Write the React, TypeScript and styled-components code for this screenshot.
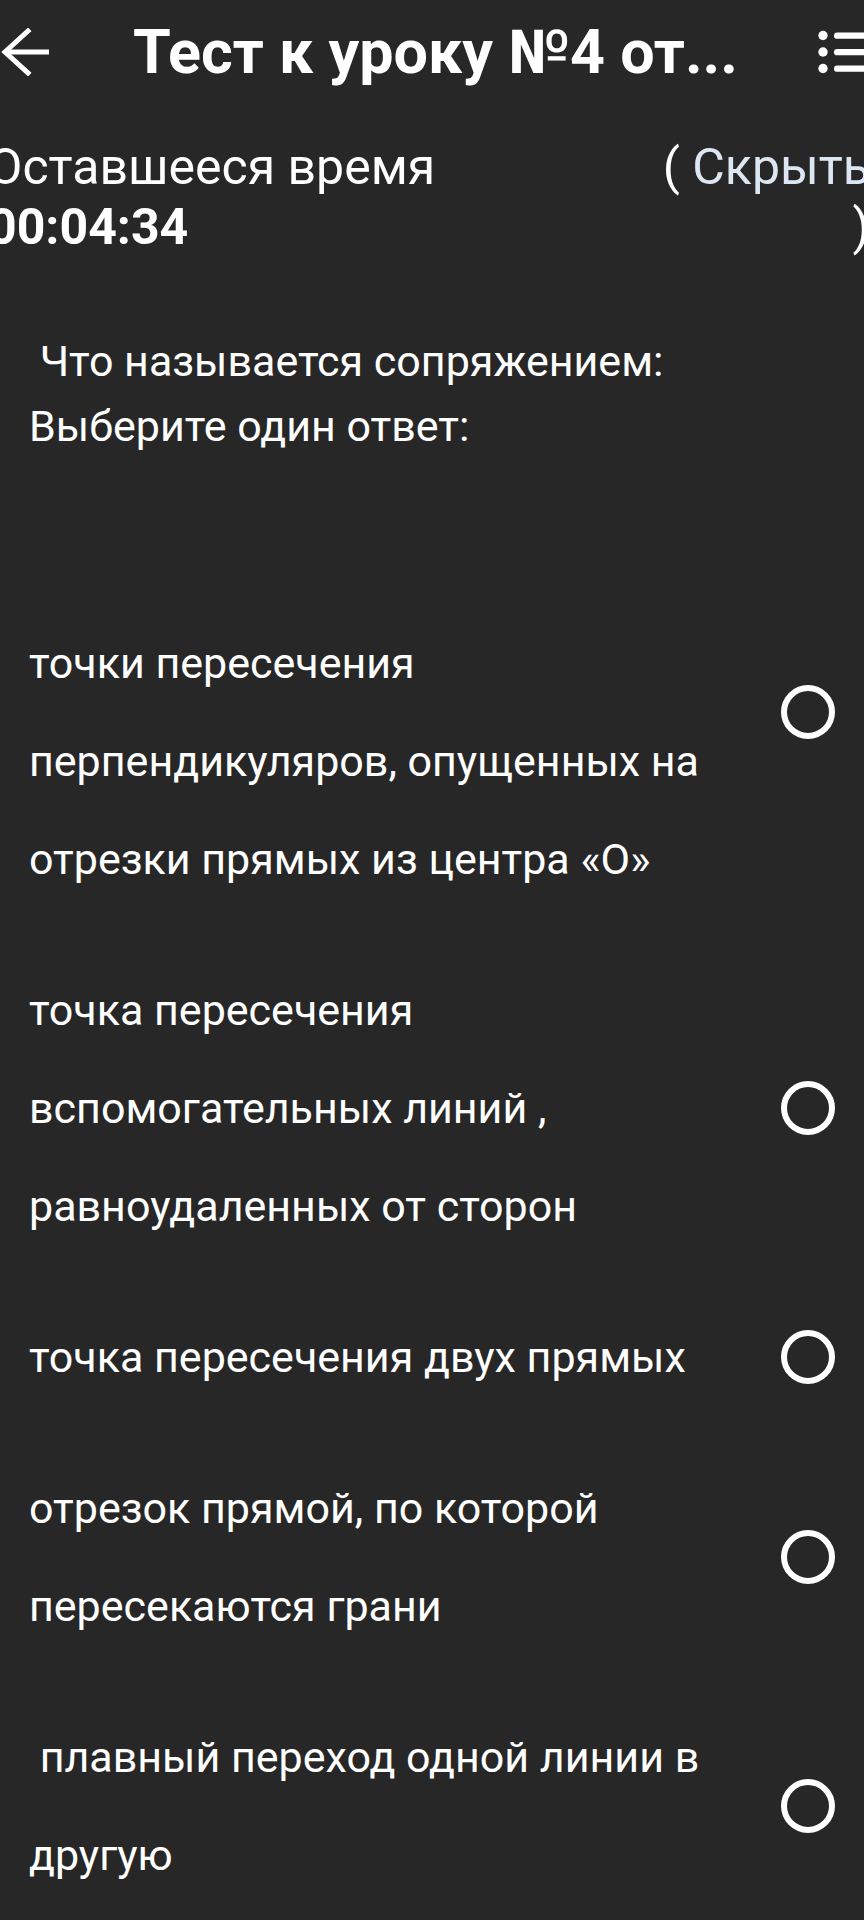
import React from "react";
import styled, { createGlobalStyle } from "styled-components";

const GlobalStyle = createGlobalStyle`
  html, body {
    margin: 0;
    padding: 0;
    background: #272727;
    overflow-x: hidden;
  }
  body {
    font-family: Roboto, "Noto Sans", "Liberation Sans", sans-serif;
    color: #ffffff;
  }
`;

const Page = styled.div`
  width: 864px;
  min-height: 1920px;
  background: #272727;
  display: flex;
  flex-direction: column;
  overflow: hidden;
`;

const Header = styled.header`
  display: flex;
  align-items: center;
  height: 80px;
  margin-top: 12px;
`;

const BackButton = styled.button`
  display: flex;
  align-items: center;
  justify-content: center;
  width: 52px;
  height: 80px;
  padding: 0;
  border: none;
  background: transparent;
  cursor: pointer;
`;

const Title = styled.h1`
  flex: 1;
  margin: 0 0 0 81px;
  font-size: 61px;
  line-height: 80px;
  font-weight: 700;
  color: #ffffff;
  white-space: nowrap;
`;

const MenuButton = styled.button`
  display: flex;
  align-items: center;
  width: 66px;
  height: 80px;
  padding: 0;
  margin-right: -14px;
  border: none;
  background: transparent;
  cursor: pointer;
`;

const TimerRow = styled.section`
  display: flex;
  justify-content: space-between;
  align-items: flex-start;
  margin-top: 45px;
`;

const TimerInfo = styled.div`
  display: flex;
  flex-direction: column;
  margin-left: -12px;
`;

const TimerLabel = styled.div`
  font-size: 50px;
  line-height: 60px;
  font-weight: 400;
  white-space: nowrap;
`;

const TimerValue = styled.div`
  font-size: 50px;
  line-height: 60px;
  font-weight: 700;
`;

const HideToggle = styled.div`
  font-size: 50px;
  line-height: 60px;
  text-align: right;
  margin-right: -6px;
  white-space: nowrap;
`;

const HideLink = styled.span`
  color: #dde7f3;
`;

const Question = styled.section`
  display: flex;
  flex-direction: column;
  margin-top: 72px;
  padding: 0 29px;
`;

const QuestionLine = styled.p`
  margin: 0;
  font-size: 43px;
  line-height: 65px;
  white-space: pre;
`;

const OptionList = styled.div`
  display: flex;
  flex-direction: column;
  gap: 53px;
  margin-top: 57px;
  padding: 0 29px;
`;

const OptionRow = styled.label`
  display: flex;
  align-items: center;
  gap: 20px;
  cursor: pointer;
`;

const OptionText = styled.div`
  flex: 1;
  font-size: 43px;
  line-height: 98px;
  white-space: pre;
`;

const Line = styled.span`
  display: block;
  min-height: 98px;
`;

const Radio = styled.span`
  flex: none;
  box-sizing: border-box;
  width: 54px;
  height: 54px;
  border: 6px solid #ffffff;
  border-radius: 50%;
`;

const ArrowIcon = () => (
  <svg width="52" height="48" viewBox="0 0 52 48" fill="none">
    <path
      d="M28 3 L5 24 L28 45"
      stroke="#ffffff"
      strokeWidth="5"
      strokeLinecap="square"
      strokeLinejoin="miter"
    />
    <path d="M6 24 H49" stroke="#ffffff" strokeWidth="5" />
  </svg>
);

const ListIcon = () => (
  <svg width="66" height="66" viewBox="0 0 24 24" fill="#ffffff">
    <circle cx="4" cy="6" r="1.7" />
    <circle cx="4" cy="12" r="1.7" />
    <circle cx="4" cy="18" r="1.7" />
    <rect x="8" y="4.9" width="13" height="2.3" rx="1.15" />
    <rect x="8" y="10.9" width="13" height="2.3" rx="1.15" />
    <rect x="8" y="16.9" width="13" height="2.3" rx="1.15" />
  </svg>
);

const options: string[][] = [
  ["", "точки пересечения", "перпендикуляров, опущенных на", "отрезки прямых из центра «О»"],
  ["точка пересечения", "вспомогательных линий ,", "равноудаленных от сторон"],
  ["точка пересечения двух прямых"],
  ["отрезок прямой, по которой", "пересекаются грани"],
  [" плавный переход одной линии в", "другую"],
];

export default function App() {
  return (
    <>
      <GlobalStyle />
      <Page>
        <Header>
          <BackButton aria-label="Назад">
            <ArrowIcon />
          </BackButton>
          <Title>Тест к уроку №4 от...</Title>
          <MenuButton aria-label="Список вопросов">
            <ListIcon />
          </MenuButton>
        </Header>

        <TimerRow>
          <TimerInfo>
            <TimerLabel>Оставшееся время</TimerLabel>
            <TimerValue>00:04:34</TimerValue>
          </TimerInfo>
          <HideToggle>
            ( <HideLink>Скрыть</HideLink>
            <br />)
          </HideToggle>
        </TimerRow>

        <Question>
          <QuestionLine> Что называется сопряжением:</QuestionLine>
          <QuestionLine>Выберите один ответ:</QuestionLine>
        </Question>

        <OptionList>
          {options.map((lines, i) => (
            <OptionRow key={i}>
              <OptionText>
                {lines.map((l, j) => (
                  <Line key={j}>{l}</Line>
                ))}
              </OptionText>
              <Radio />
            </OptionRow>
          ))}
        </OptionList>
      </Page>
    </>
  );
}
